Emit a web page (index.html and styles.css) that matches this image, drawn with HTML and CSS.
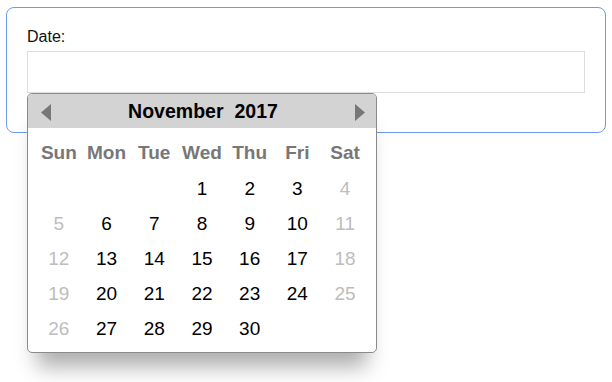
FILE: index.html
```html
<!DOCTYPE html>
<html lang="en">

<head>
  <meta charset="UTF-8">
  <meta name="viewport" content="width=device-width, initial-scale=1.0">
  <title>Date Picker</title>
  <link rel="stylesheet" href="styles.css">
</head>

<body>

  <!-- Form Box -->
  <div class="form-box">
    <label class="field-label" for="date-input">Date:</label>
    <div class="field-wrap">
      <input class="date-input" id="date-input" type="text">

      <!-- Calendar Pop-Up -->
      <div class="calendar">
        <div class="cal-header">
          <svg class="cal-arrow" width="10" height="17" viewBox="0 0 10 17"><path d="M10 0 L0 8.5 L10 17 Z" fill="#777"/></svg>
          <div class="cal-title"><span>November</span><span>2017</span></div>
          <svg class="cal-arrow" width="10" height="17" viewBox="0 0 10 17"><path d="M0 0 L10 8.5 L0 17 Z" fill="#777"/></svg>
        </div>
        <table class="cal-table">
          <thead>
            <tr><th>Sun</th><th>Mon</th><th>Tue</th><th>Wed</th><th>Thu</th><th>Fri</th><th>Sat</th></tr>
          </thead>
          <tbody>
            <tr><td></td><td></td><td></td><td>1</td><td>2</td><td>3</td><td class="weekend">4</td></tr>
            <tr><td class="weekend">5</td><td>6</td><td>7</td><td>8</td><td>9</td><td>10</td><td class="weekend">11</td></tr>
            <tr><td class="weekend">12</td><td>13</td><td>14</td><td>15</td><td>16</td><td>17</td><td class="weekend">18</td></tr>
            <tr><td class="weekend">19</td><td>20</td><td>21</td><td>22</td><td>23</td><td>24</td><td class="weekend">25</td></tr>
            <tr><td class="weekend">26</td><td>27</td><td>28</td><td>29</td><td>30</td><td></td><td></td></tr>
          </tbody>
        </table>
      </div>
    </div>
  </div>

</body>

</html>
```

FILE: styles.css
```css
html {
  height: 100%;
}

body {
  margin: 0;
  min-height: 100%;
  box-sizing: border-box;
  padding: 7px 6px;
  font-family: "Liberation Sans", Arial, sans-serif;
  background-color: #ffffff;
}

.form-box {
  width: 600px;
  box-sizing: border-box;
  border: 1px solid #6b9bef;
  border-radius: 8px;
  padding: 20px 20px 39px;
}

.field-label {
  display: block;
  font-size: 16px;
  line-height: 18px;
  color: #111;
  margin-bottom: 5px;
}

.field-wrap {
  position: relative;
}

.date-input {
  display: block;
  width: 100%;
  height: 42px;
  box-sizing: border-box;
  border: 1px solid #dddddd;
  margin: 0;
  outline: none;
}

.calendar {
  position: absolute;
  top: 100%;
  left: 0;
  width: 350px;
  box-sizing: border-box;
  background-color: white;
  border: 1px solid #8a8a8a;
  border-radius: 5px;
  overflow: hidden;
  padding-bottom: 6px;
  box-shadow: 0 24px 20px -10px rgba(0, 0, 0, 0.32);
}

.cal-header {
  height: 34px;
  background-color: #d3d3d3;
  display: flex;
  align-items: center;
  justify-content: space-between;
  padding: 0 11px 0 13px;
}

.cal-arrow {
  display: block;
  margin-top: 2px;
}

.cal-title {
  display: flex;
  gap: 11px;
  font-size: 19.5px;
  font-weight: bold;
  color: #000;
}

.cal-table {
  width: 334px;
  margin: 6px 7px 0;
  border-collapse: collapse;
  table-layout: fixed;
}

.cal-table th {
  height: 37px;
  padding: 0;
  font-size: 19px;
  font-weight: bold;
  color: #777777;
  text-align: center;
}

.cal-table td {
  height: 35px;
  padding: 0;
  font-size: 19px;
  color: #000;
  text-align: center;
}

.cal-table td.weekend {
  color: #bdbdbd;
}
```
